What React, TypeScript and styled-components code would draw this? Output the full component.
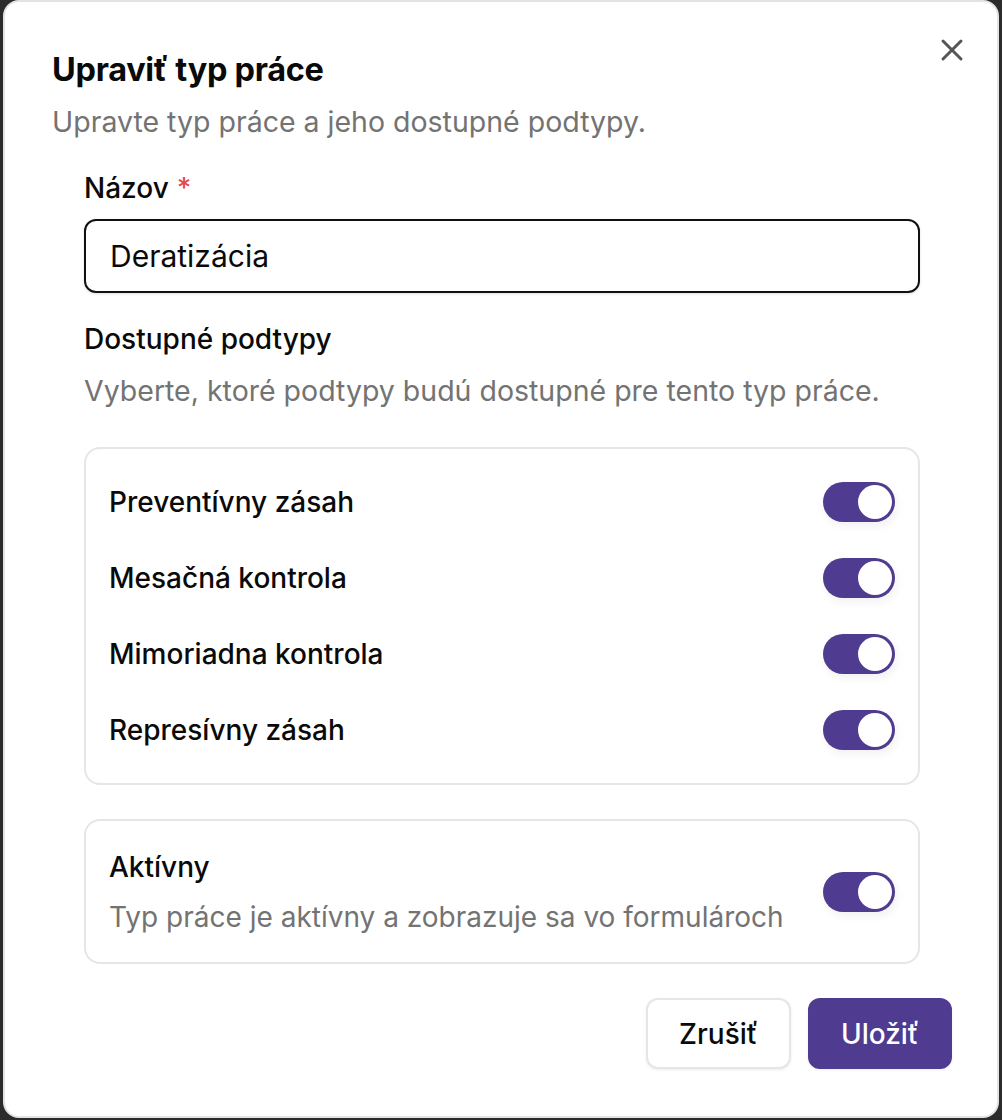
import React, { useState } from "react";
import styled, { createGlobalStyle } from "styled-components";
import { X } from "lucide-react";

const GlobalStyle = createGlobalStyle`
  html, body {
    margin: 0;
    padding: 0;
    background: #2b2b2b;
  }
  * {
    box-sizing: border-box;
  }
`;

const Backdrop = styled.div`
  display: flex;
  padding: 0 3px 2px 3px;
  min-height: 1120px;
  font-family: Inter, "Noto Sans", sans-serif;
  color: #0a0a0a;
`;

const Dialog = styled.div`
  position: relative;
  flex: 1;
  display: flex;
  flex-direction: column;
  background: #ffffff;
  border: 2px solid #e3e3e3;
  border-radius: 16px;
  padding: 48px 45px 46px 47px;
`;

const CloseButton = styled.button`
  position: absolute;
  top: 28px;
  right: 25px;
  display: flex;
  align-items: center;
  justify-content: center;
  width: 40px;
  height: 40px;
  padding: 0;
  border: none;
  background: transparent;
  color: #555555;
  cursor: pointer;
`;

const Title = styled.h2`
  margin: 0;
  font-size: 32.5px;
  line-height: 40px;
  font-weight: 700;
  letter-spacing: -0.3px;
`;

const Subtitle = styled.p`
  margin: 12px 0 0 0;
  font-size: 28.5px;
  line-height: 40px;
  color: #737373;
`;

const Form = styled.div`
  display: flex;
  flex-direction: column;
  padding: 0 32px 0 32px;
  margin-top: 26px;
`;

const Label = styled.div`
  font-size: 28px;
  line-height: 40px;
  font-weight: 500;
`;

const Required = styled.span`
  color: #e5484d;
  margin-left: 8px;
`;

const TextInput = styled.input`
  margin-top: 11px;
  height: 74px;
  width: 100%;
  border: 2px solid #111111;
  border-radius: 12px;
  padding: 0 24px;
  font-family: inherit;
  font-size: 30px;
  color: #0a0a0a;
  outline: none;
  box-shadow: 0 1px 3px rgba(0, 0, 0, 0.12);
`;

const SectionLabel = styled(Label)`
  margin-top: 26px;
`;

const Hint = styled.div`
  margin-top: 12px;
  font-size: 28.5px;
  line-height: 40px;
  color: #737373;
`;

const Card = styled.div<{ $gap: number; $pad: string; $mt: number }>`
  margin-top: ${(p) => p.$mt}px;
  display: flex;
  flex-direction: column;
  gap: ${(p) => p.$gap}px;
  border: 2px solid #e6e6e6;
  border-radius: 16px;
  padding: ${(p) => p.$pad};
`;

const Row = styled.div`
  display: flex;
  align-items: center;
  justify-content: space-between;
  gap: 24px;
`;

const RowText = styled.div`
  display: flex;
  flex-direction: column;
  gap: 10px;
`;

const RowLabel = styled.div`
  font-size: 28px;
  line-height: 40px;
  font-weight: 500;
`;

const RowHint = styled.div`
  font-size: 28px;
  line-height: 40px;
  color: #737373;
`;

const Track = styled.button<{ $on: boolean }>`
  position: relative;
  flex: none;
  width: 72px;
  height: 40px;
  padding: 0;
  border: none;
  border-radius: 20px;
  background: ${(p) => (p.$on ? "#4f3b8f" : "#e5e5e5")};
  box-shadow: 2px 4px 10px rgba(0, 0, 0, 0.06);
  cursor: pointer;
`;

const Thumb = styled.span<{ $on: boolean }>`
  position: absolute;
  top: 3px;
  left: ${(p) => (p.$on ? "35px" : "3px")};
  width: 34px;
  height: 34px;
  border-radius: 50%;
  background: #ffffff;
`;

const Footer = styled.div`
  margin-top: 34px;
  display: flex;
  justify-content: flex-end;
  gap: 17px;
`;

const Button = styled.button<{ $primary?: boolean }>`
  height: 71px;
  padding: 0 31px;
  border-radius: 12px;
  font-family: inherit;
  font-size: 28px;
  font-weight: 500;
  cursor: pointer;
  border: 2px solid ${(p) => (p.$primary ? "#4f3b8f" : "#e6e6e6")};
  background: ${(p) => (p.$primary ? "#4f3b8f" : "#ffffff")};
  color: ${(p) => (p.$primary ? "#ffffff" : "#0a0a0a")};
  box-shadow: 0 1px 3px rgba(0, 0, 0, 0.08);
`;

function Switch({ on, onChange }: { on: boolean; onChange: (v: boolean) => void }) {
  return (
    <Track $on={on} onClick={() => onChange(!on)}>
      <Thumb $on={on} />
    </Track>
  );
}

const subtypes = [
  "Preventívny zásah",
  "Mesačná kontrola",
  "Mimoriadna kontrola",
  "Represívny zásah",
];

export default function App() {
  const [enabled, setEnabled] = useState<boolean[]>([true, true, true, true]);
  const [active, setActive] = useState(true);
  const [name, setName] = useState("Deratizácia");

  return (
    <>
      <GlobalStyle />
      <Backdrop>
        <Dialog>
          <CloseButton aria-label="Zavrieť">
            <X size={36} strokeWidth={2} />
          </CloseButton>
          <Title>Upraviť typ práce</Title>
          <Subtitle>Upravte typ práce a jeho dostupné podtypy.</Subtitle>
          <Form>
            <Label>
              Názov<Required>*</Required>
            </Label>
            <TextInput value={name} onChange={(e) => setName(e.target.value)} />
            <SectionLabel>Dostupné podtypy</SectionLabel>
            <Hint>Vyberte, ktoré podtypy budú dostupné pre tento typ práce.</Hint>
            <Card $mt={36} $gap={36} $pad="33px 23px">
              {subtypes.map((s, i) => (
                <Row key={s}>
                  <RowLabel>{s}</RowLabel>
                  <Switch
                    on={enabled[i]}
                    onChange={(v) =>
                      setEnabled((prev) => prev.map((x, j) => (j === i ? v : x)))
                    }
                  />
                </Row>
              ))}
            </Card>
            <Card $mt={34} $gap={0} $pad="26px 23px 25px 23px">
              <Row>
                <RowText>
                  <RowLabel>Aktívny</RowLabel>
                  <RowHint>Typ práce je aktívny a zobrazuje sa vo formulároch</RowHint>
                </RowText>
                <Switch on={active} onChange={setActive} />
              </Row>
            </Card>
          </Form>
          <Footer>
            <Button>Zrušiť</Button>
            <Button $primary>Uložiť</Button>
          </Footer>
        </Dialog>
      </Backdrop>
    </>
  );
}
